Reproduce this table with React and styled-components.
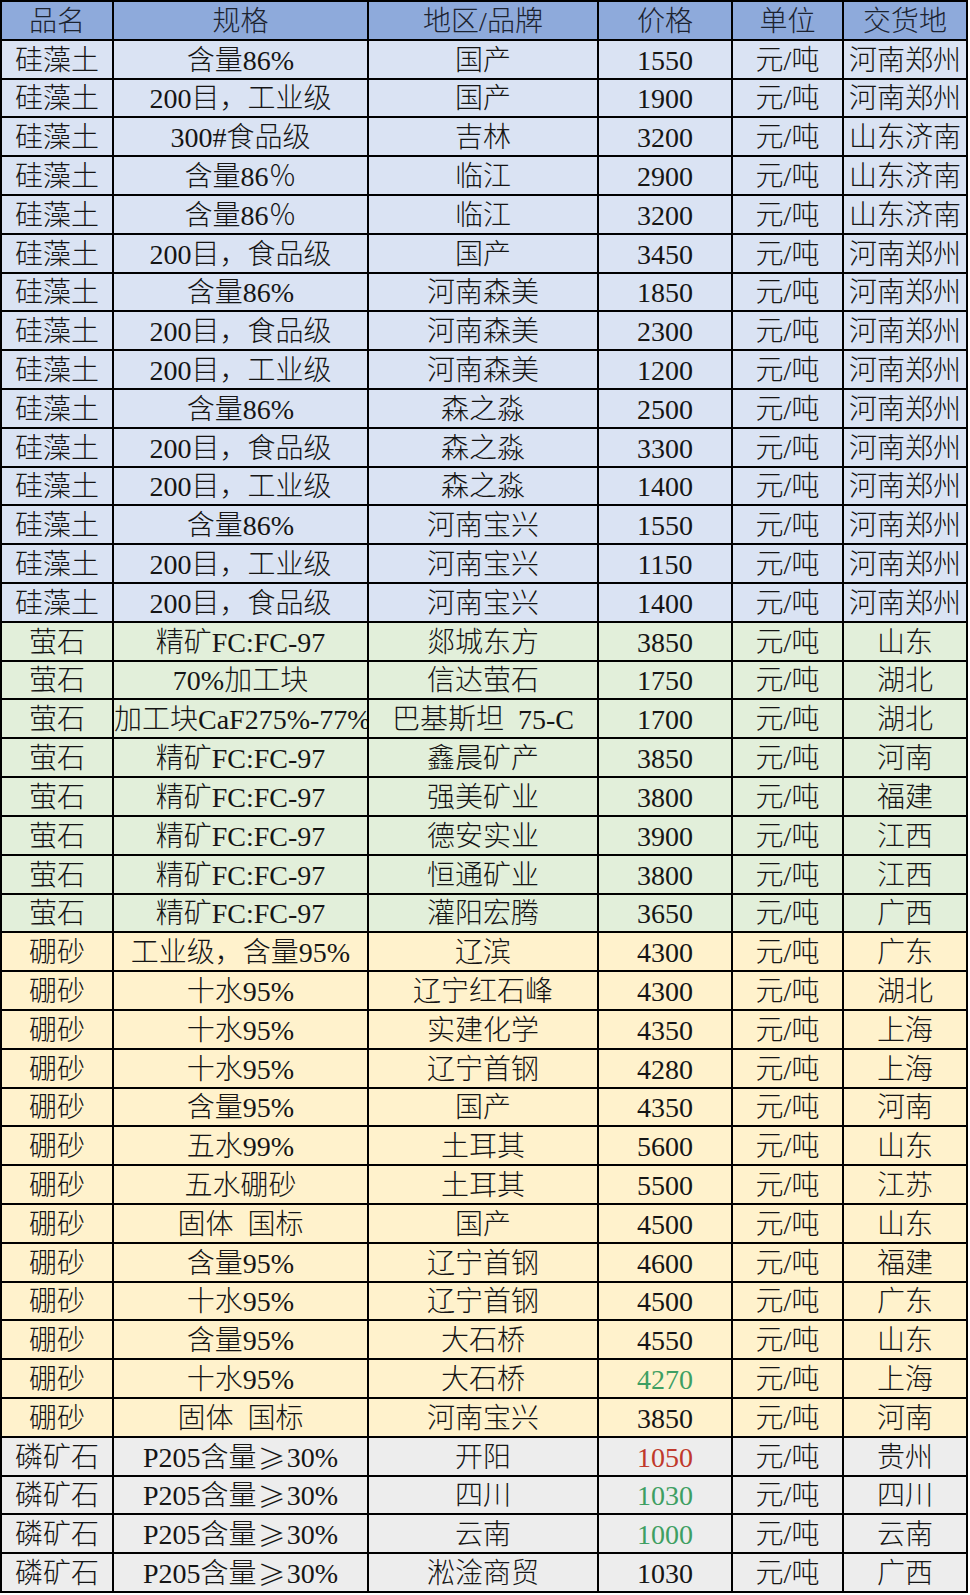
import React from "react"
import styled, { createGlobalStyle } from "styled-components"

const GlobalStyle = createGlobalStyle`
  html, body {
    margin: 0;
    padding: 0;
    background: #fff;
  }
  body {
    font-family: "Liberation Serif", "Noto Sans CJK SC", serif;
  }
`

const TONES = {
  head: "#8eaadb",
  blue: "#dae3f3",
  green: "#e2efda",
  yellow: "#fff2cc",
  gray: "#ededed",
}

const INK = {
  red: "#c0392b",
  green: "#3e9f63",
}

const COLS = "110px 253px 228px 132px 109px 122px"

const Table = styled.div`
  display: grid;
  grid-template-rows: repeat(41, 1fr);
  gap: 2px;
  width: 968px;
  height: 1593px;
  padding: 2px;
  box-sizing: border-box;
  background: #000;
`

const Row = styled.div`
  display: grid;
  grid-template-columns: ${COLS};
  gap: 2px;
  min-height: 0;
`

const Cell = styled.div`
  display: flex;
  align-items: center;
  justify-content: ${p => (p.$clip ? "flex-start" : "center")};
  padding-top: 3px;
  box-sizing: border-box;
  overflow: ${p => (p.$clip ? "hidden" : "visible")};
  white-space: pre;
  background: ${p => TONES[p.$tone]};
  color: ${p => (p.$ink ? INK[p.$ink] : p.$tone === "head" ? "#1c2330" : "#151515")};
  font-size: 28px;
  font-weight: 300;
  line-height: 1.15;
`

// full-width sign as in the sheet's CJK font
const Wide = styled.span`
  font-family: "Noto Sans CJK SC", sans-serif;
  font-weight: 300;
  margin: 0 1px;
`

const header = ["品名", "规格", "地区/品牌", "价格", "单位", "交货地"]

const rows = [
  ["blue", "硅藻土", "含量86%", "国产", "1550", "河南郑州"],
  ["blue", "硅藻土", "200目，工业级", "国产", "1900", "河南郑州"],
  ["blue", "硅藻土", "300#食品级", "吉林", "3200", "山东济南"],
  ["blue", "硅藻土", "含量86％", "临江", "2900", "山东济南"],
  ["blue", "硅藻土", "含量86％", "临江", "3200", "山东济南"],
  ["blue", "硅藻土", "200目，食品级", "国产", "3450", "河南郑州"],
  ["blue", "硅藻土", "含量86%", "河南森美", "1850", "河南郑州"],
  ["blue", "硅藻土", "200目，食品级", "河南森美", "2300", "河南郑州"],
  ["blue", "硅藻土", "200目，工业级", "河南森美", "1200", "河南郑州"],
  ["blue", "硅藻土", "含量86%", "森之淼", "2500", "河南郑州"],
  ["blue", "硅藻土", "200目，食品级", "森之淼", "3300", "河南郑州"],
  ["blue", "硅藻土", "200目，工业级", "森之淼", "1400", "河南郑州"],
  ["blue", "硅藻土", "含量86%", "河南宝兴", "1550", "河南郑州"],
  ["blue", "硅藻土", "200目，工业级", "河南宝兴", "1150", "河南郑州"],
  ["blue", "硅藻土", "200目，食品级", "河南宝兴", "1400", "河南郑州"],
  ["green", "萤石", "精矿FC:FC-97", "郯城东方", "3850", "山东"],
  ["green", "萤石", "70%加工块", "信达萤石", "1750", "湖北"],
  ["green", "萤石", "加工块CaF275%-77%", "巴基斯坦  75-C", "1700", "湖北"],
  ["green", "萤石", "精矿FC:FC-97", "鑫晨矿产", "3850", "河南"],
  ["green", "萤石", "精矿FC:FC-97", "强美矿业", "3800", "福建"],
  ["green", "萤石", "精矿FC:FC-97", "德安实业", "3900", "江西"],
  ["green", "萤石", "精矿FC:FC-97", "恒通矿业", "3800", "江西"],
  ["green", "萤石", "精矿FC:FC-97", "灌阳宏腾", "3650", "广西"],
  ["yellow", "硼砂", "工业级，含量95%", "辽滨", "4300", "广东"],
  ["yellow", "硼砂", "十水95%", "辽宁红石峰", "4300", "湖北"],
  ["yellow", "硼砂", "十水95%", "实建化学", "4350", "上海"],
  ["yellow", "硼砂", "十水95%", "辽宁首钢", "4280", "上海"],
  ["yellow", "硼砂", "含量95%", "国产", "4350", "河南"],
  ["yellow", "硼砂", "五水99%", "土耳其", "5600", "山东"],
  ["yellow", "硼砂", "五水硼砂", "土耳其", "5500", "江苏"],
  ["yellow", "硼砂", "固体  国标", "国产", "4500", "山东"],
  ["yellow", "硼砂", "含量95%", "辽宁首钢", "4600", "福建"],
  ["yellow", "硼砂", "十水95%", "辽宁首钢", "4500", "广东"],
  ["yellow", "硼砂", "含量95%", "大石桥", "4550", "山东"],
  ["yellow", "硼砂", "十水95%", "大石桥", "4270", "上海", "green"],
  ["yellow", "硼砂", "固体  国标", "河南宝兴", "3850", "河南"],
  ["gray", "磷矿石", "P205含量≥30%", "开阳", "1050", "贵州", "red"],
  ["gray", "磷矿石", "P205含量≥30%", "四川", "1030", "四川", "green"],
  ["gray", "磷矿石", "P205含量≥30%", "云南", "1000", "云南", "green"],
  ["gray", "磷矿石", "P205含量≥30%", "淞淦商贸", "1030", "广西"],
]

const renderSpec = spec => {
  const parts = spec.split("≥")
  if (parts.length === 1) return spec
  return (
    <>
      {parts[0]}
      <Wide>≥</Wide>
      {parts[1]}
    </>
  )
}

export default function App() {
  return (
    <>
      <GlobalStyle />
      <Table>
        <Row>
          {header.map(h => (
            <Cell key={h} $tone="head">{h}</Cell>
          ))}
        </Row>
        {rows.map(([tone, name, spec, brand, price, place, ink], i) => (
          <Row key={i}>
            <Cell $tone={tone}>{name}</Cell>
            <Cell $tone={tone} $clip={spec.length > 12}>{renderSpec(spec)}</Cell>
            <Cell $tone={tone}>{brand}</Cell>
            <Cell $tone={tone} $ink={ink}>{price}</Cell>
            <Cell $tone={tone}>元/吨</Cell>
            <Cell $tone={tone}>{place}</Cell>
          </Row>
        ))}
      </Table>
    </>
  )
}
